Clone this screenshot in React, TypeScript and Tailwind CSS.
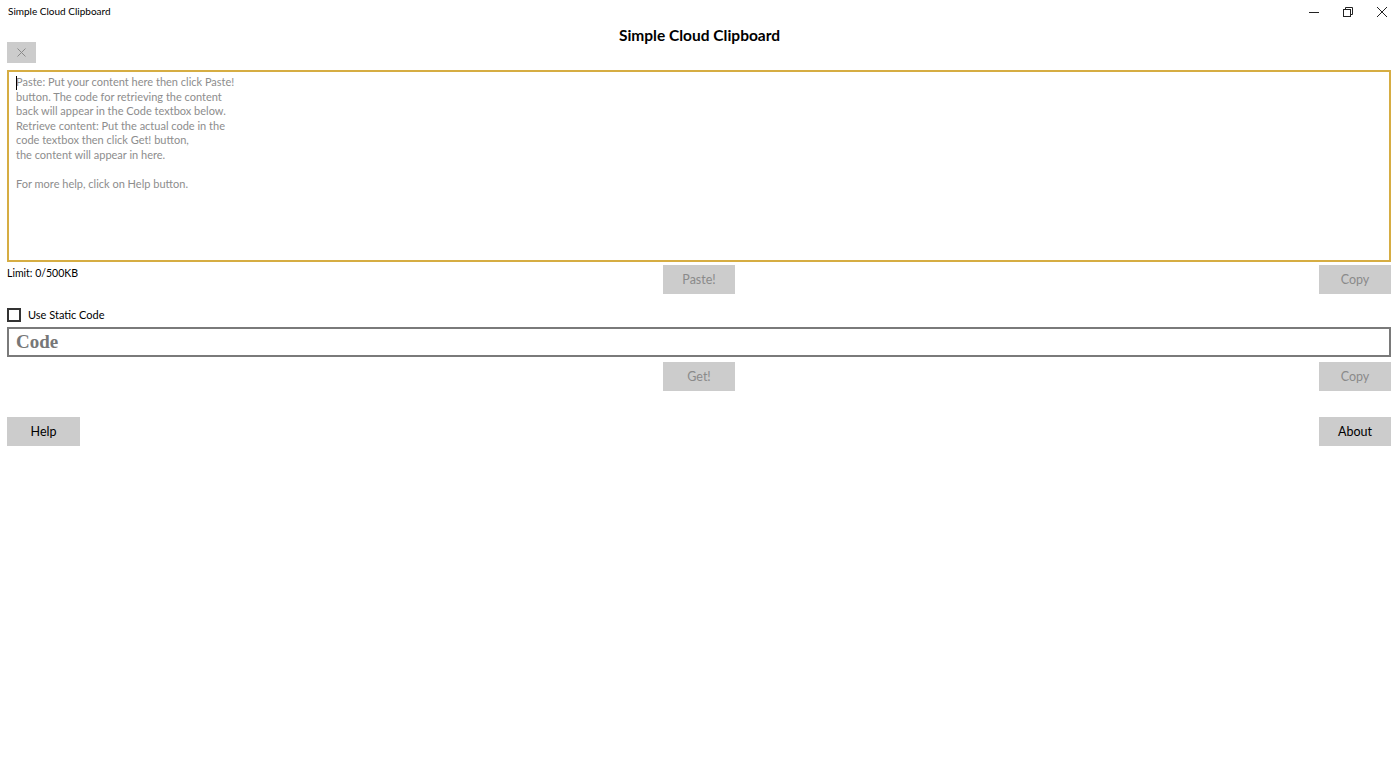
import React from "react";

const font = { fontFamily: 'Lato, "Noto Sans", sans-serif' };

function Btn({ label, disabled, w = "w-[72px]" }: { label: string; disabled?: boolean; w?: string }) {
  return (
    <button
      className={`${w} h-[29px] shrink-0 bg-[#cccccc] text-[12.5px] pt-[2px] ${disabled ? "text-[#8a8a8a]" : "text-black"} flex items-center justify-center`}
    >
      {label}
    </button>
  );
}

export default function App() {
  return (
    <div className="w-[1399px] h-[758px] bg-white relative overflow-hidden" style={font}>
      {/* title bar */}
      <div className="h-[23px] flex items-center justify-between">
        <div className="pl-[8px] text-[10px] text-black">Simple Cloud Clipboard</div>
        <div className="flex items-center h-full text-[#333]">
          <div className="w-[34px] flex justify-center">
            <svg width="10" height="10" viewBox="0 0 10 10"><path d="M0 5.5h10" stroke="#222" strokeWidth="1" /></svg>
          </div>
          <div className="w-[34px] flex justify-center">
            <svg width="10" height="10" viewBox="0 0 10 10" fill="none" stroke="#222" strokeWidth="1">
              <rect x="0.5" y="2.5" width="7" height="7" />
              <path d="M2.5 2.5V0.5h7v7h-2" />
            </svg>
          </div>
          <div className="w-[34px] flex justify-center">
            <svg width="10" height="10" viewBox="0 0 10 10"><path d="M0 0L10 10M10 0L0 10" stroke="#222" strokeWidth="1" /></svg>
          </div>
        </div>
      </div>
      <div className="text-center font-bold text-[15.5px] text-black leading-[22px] mt-[1px]">Simple Cloud Clipboard</div>
      <div className="pl-[7px] pr-[8px]">
        <button className="w-[29px] h-[21px] bg-[#cccccc] flex items-center justify-center mt-[-4px]">
          <svg width="9" height="9" viewBox="0 0 9 9"><path d="M0.5 0.5L8.5 8.5M8.5 0.5L0.5 8.5" stroke="#8a8a8a" strokeWidth="1" /></svg>
        </button>
        <div className="mt-[7px] h-[192px] border-2 border-[#d6ad43] pl-[7px] pt-[3px] relative">
          <div className="absolute left-[7px] top-[4px] w-px h-[14px] bg-black" />
          <div className="text-[11px] leading-[14.5px] text-[#8d8d8d] whitespace-pre">
            {"Paste: Put your content here then click Paste!\nbutton. The code for retrieving the content\nback will appear in the Code textbox below.\nRetrieve content: Put the actual code in the\ncode textbox then click Get! button,\nthe content will appear in here.\n\nFor more help, click on Help button."}
          </div>
        </div>
        <div className="flex items-start justify-between mt-[3px]">
          <div className="w-[72px] whitespace-nowrap text-[10.5px] text-black leading-[14px] pt-[1px]">Limit: 0/500KB</div>
          <Btn label="Paste!" disabled />
          <Btn label="Copy" disabled />
        </div>
        <div className="flex items-center gap-[7px] mt-[14px] h-[14px]">
          <div className="w-[14px] h-[14px] border-2 border-[#333]" />
          <span className="text-[11px] text-black">Use Static Code</span>
        </div>
        <div className="mt-[5px] h-[30px] border-2 border-[#7a7a7a] flex items-center pl-[7px]">
          <span className="text-[19px] font-bold text-[#777]" style={{ fontFamily: '"Liberation Serif", serif' }}>Code</span>
        </div>
        <div className="flex items-start justify-between mt-[5px]">
          <div className="w-[72px]" />
          <Btn label="Get!" disabled />
          <Btn label="Copy" disabled />
        </div>
        <div className="flex items-start justify-between mt-[26px]">
          <Btn label="Help" w="w-[73px]" />
          <Btn label="About" />
        </div>
      </div>
    </div>
  );
}
